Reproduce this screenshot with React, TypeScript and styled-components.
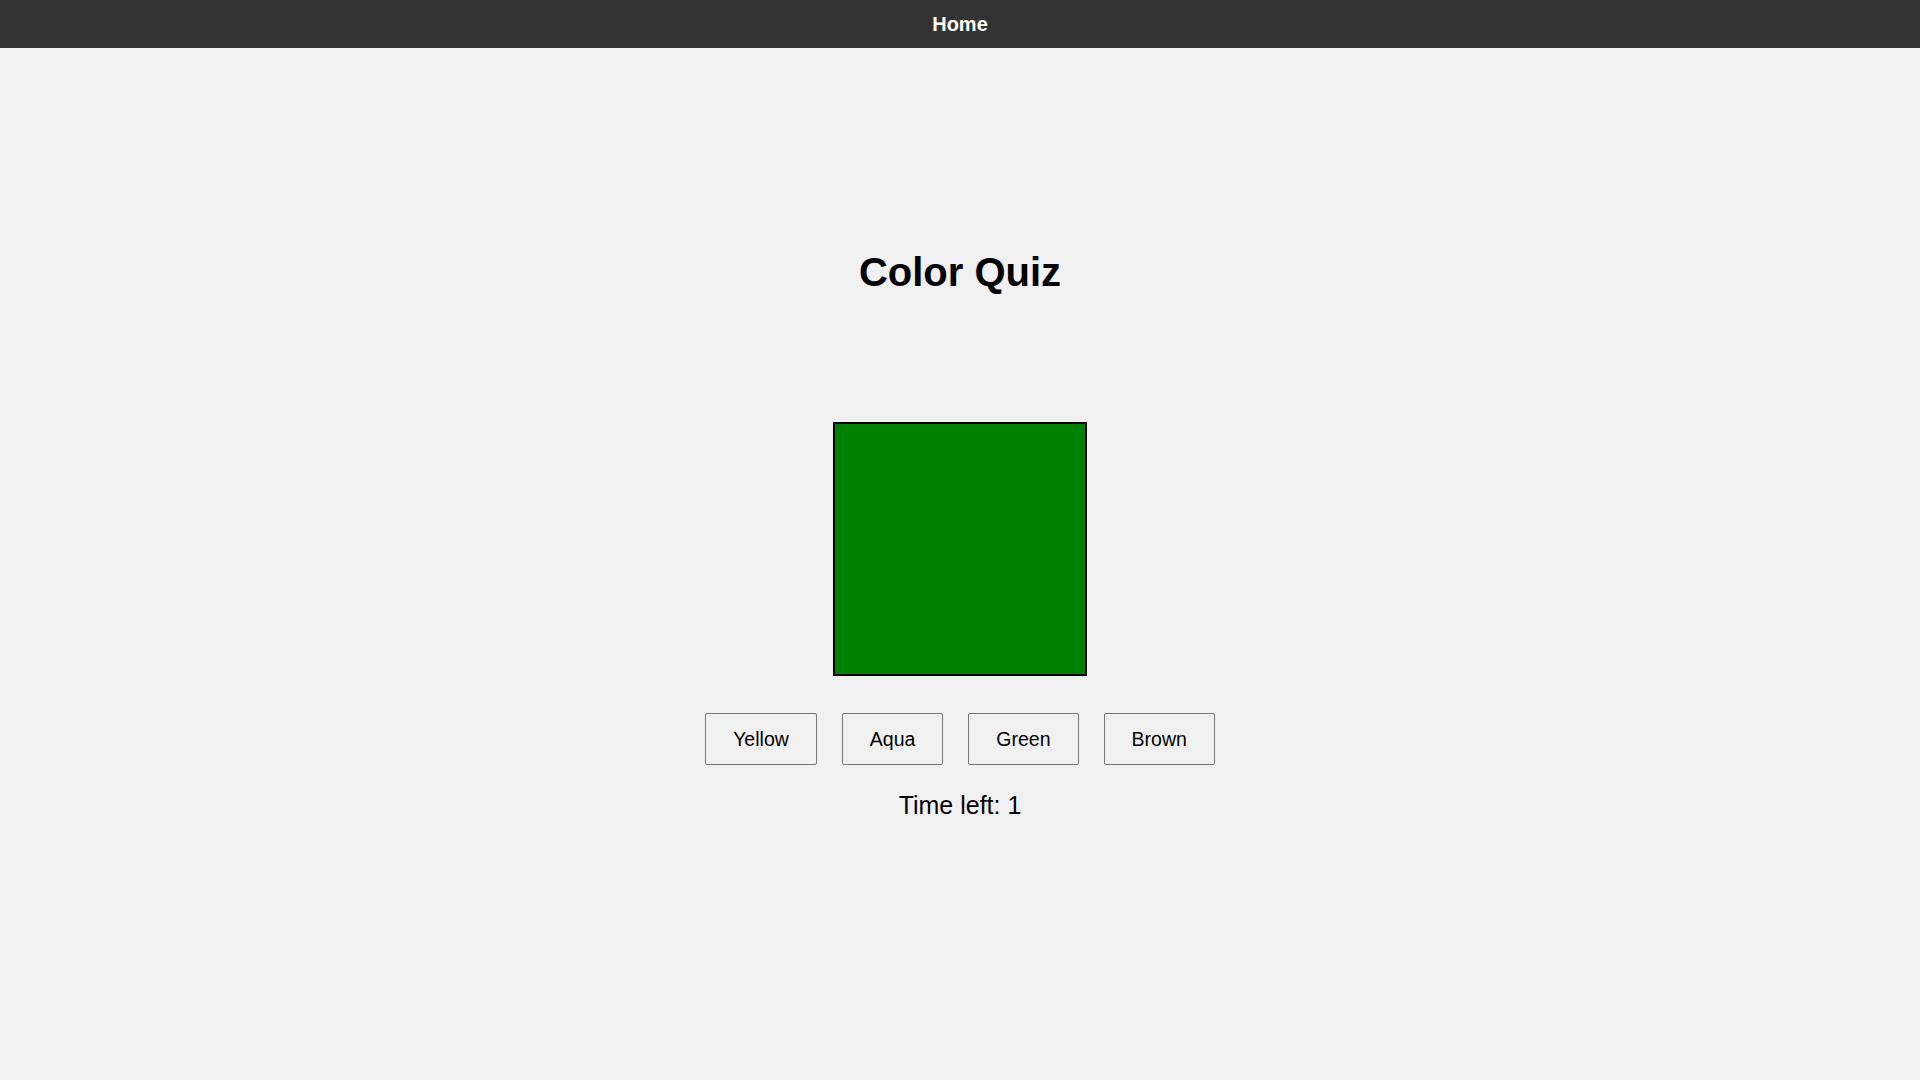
import React from 'react';
import styled, { createGlobalStyle } from 'styled-components';

const GlobalStyle = createGlobalStyle`
    html, body {
        margin: 0;
        padding: 0;
        background: #f0f0f0;
        font-family: "Liberation Sans", Arial, sans-serif;
    }
`;

const options = ['Yellow', 'Aqua', 'Green', 'Brown'];

const App: React.FC = () => {
    return (
        <>
            <GlobalStyle />
            <Nav>
                <NavLink href="#">Home</NavLink>
            </Nav>
            <Main>
                <Title>Color Quiz</Title>
                <Swatch color="#008000" />
                <Choices>
                    {options.map((name) => (
                        <Choice key={name}>{name}</Choice>
                    ))}
                </Choices>
                <Timer>Time left: 1</Timer>
            </Main>
        </>
    );
};

export default App;

const Nav = styled.nav`
    height: 48px;
    background: #333333;
    display: flex;
    align-items: center;
    justify-content: center;
`;

const NavLink = styled.a`
    color: #ffffff;
    font-weight: bold;
    font-size: 20px;
    text-decoration: none;
`;

const Main = styled.main`
    display: flex;
    flex-direction: column;
    align-items: center;
    padding-top: 201px;
`;

const Title = styled.h1`
    margin: 0 0 127px;
    font-size: 40px;
    line-height: 46px;
    font-weight: bold;
    color: #000000;
`;

const Swatch = styled.div<{ color: string }>`
    width: 250px;
    height: 250px;
    background: ${({ color }) => color};
    border: 2px solid #000000;
`;

const Choices = styled.div`
    display: flex;
    gap: 25px;
    margin-top: 37px;
`;

const Choice = styled.button`
    font-family: "Liberation Sans", Arial, sans-serif;
    font-size: 19.5px;
    line-height: 22px;
    padding: 14px 27px;
    background: #f0f0f0;
    color: #000000;
    border: 1px solid #767676;
    border-radius: 2px;
    cursor: pointer;
`;

const Timer = styled.p`
    margin: 26px 0 0;
    font-size: 25px;
    line-height: 29px;
    color: #000000;
`;
